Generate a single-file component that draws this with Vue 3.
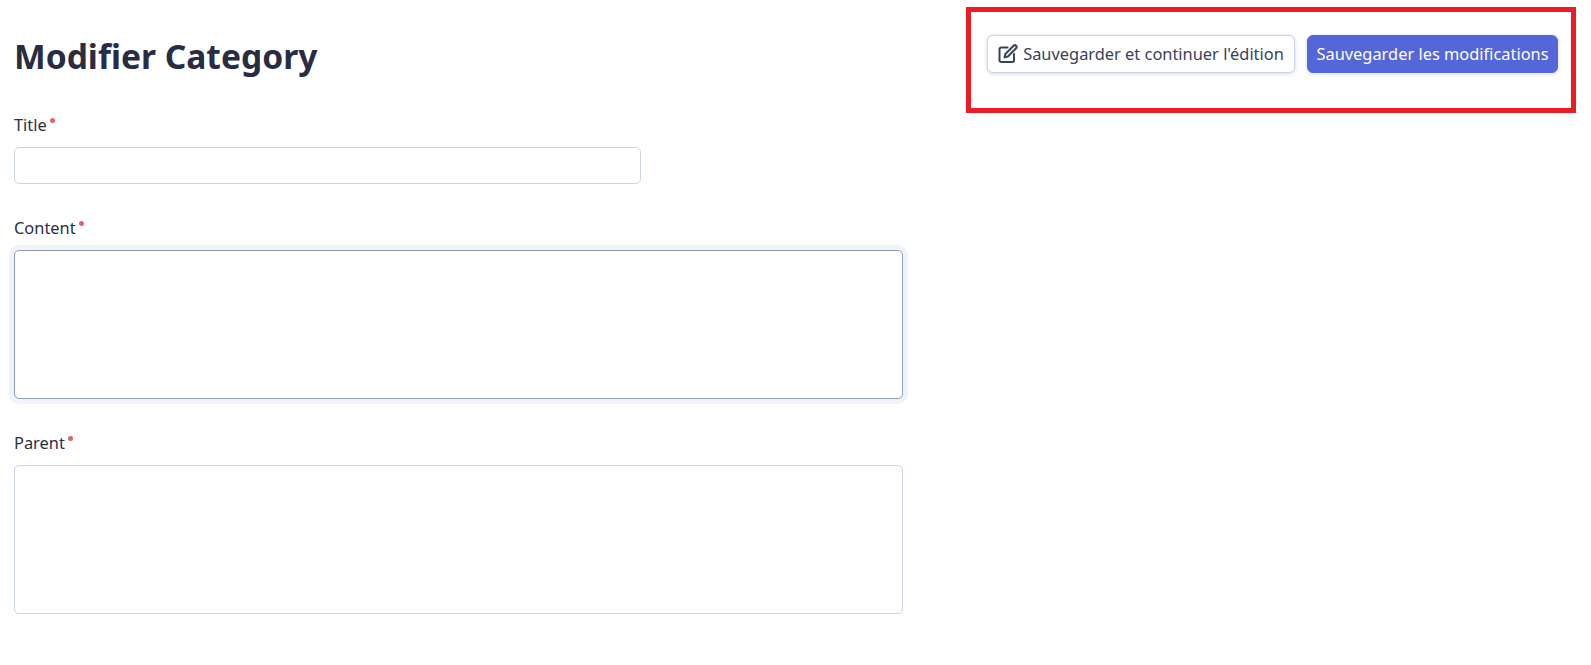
<script setup>
const fields = [
  { label: 'Title', kind: 'input' },
  { label: 'Content', kind: 'area', focused: true },
  { label: 'Parent', kind: 'area' },
]
</script>

<template>
  <div class="page">
    <header class="top">
      <h1 class="title">Modifier Category</h1>
      <div class="actions">
        <button class="btn light" type="button">
          <svg class="ico" viewBox="0 0 20 20" fill="none" stroke="currentColor" stroke-width="2" stroke-linecap="round" stroke-linejoin="round">
            <path d="M9.5 3.5H3.2A1.7 1.7 0 0 0 1.5 5.2v11.1A1.7 1.7 0 0 0 3.2 18h11.1a1.7 1.7 0 0 0 1.7-1.7V10" />
            <path d="M15.6 1.8a1.7 1.7 0 0 1 2.5 2.5l-8.2 8.2-3.4.9.9-3.4z" />
          </svg>
          <span>Sauvegarder et continuer l'édition</span>
        </button>
        <button class="btn primary" type="button">Sauvegarder les modifications</button>
      </div>
    </header>
    <form class="form">
      <div v-for="f in fields" :key="f.label" class="field">
        <label class="label">{{ f.label }}<span class="req" aria-hidden="true"></span></label>
        <input v-if="f.kind === 'input'" class="control" type="text" />
        <textarea v-else class="control" :class="{ focused: f.focused }"></textarea>
      </div>
    </form>
  </div>
</template>

<style>
html, body { background: #fff; }
</style>

<style scoped>
.page {
  box-sizing: border-box;
  height: 665px;
  padding: 7px 15px 0 14px;
  font-family: "Noto Sans", "Open Sans", "Liberation Sans", sans-serif;
  color: #2a3044;
  overflow: hidden;
}
.top {
  display: flex;
  justify-content: space-between;
  align-items: flex-start;
}
.title {
  margin: 24px 0 0;
  font-size: 33.6px;
  line-height: 50px;
  font-weight: 700;
  color: #282d43;
}
.actions {
  box-sizing: border-box;
  width: 610px;
  height: 106px;
  border: 5px solid #ed1c24;
  padding: 23px 13px 0 16px;
  display: flex;
  justify-content: space-between;
  align-items: flex-start;
}
.btn {
  box-sizing: border-box;
  height: 38px;
  border-radius: 6px;
  font-family: inherit;
  font-size: 16.4px;
  line-height: 22px;
  display: inline-flex;
  align-items: center;
  justify-content: center;
  white-space: nowrap;
  box-shadow: 0 1px 4px rgba(60, 70, 110, 0.2);
  padding: 0;
}
.light {
  width: 308px;
  background: #fff;
  border: 1px solid #c9d3e3;
  color: #39415c;
  gap: 5px;
}
.primary {
  width: 251px;
  background: #5467d8;
  border: 1px solid #5467d8;
  color: #fff;
}
.ico { width: 20px; height: 20px; color: #39415c; flex: none; }
.form {
  width: 889px;
  display: flex;
  flex-direction: column;
  gap: 32px;
}
.field { display: flex; flex-direction: column; gap: 10px; }
.label {
  display: block;
  font-size: 16.4px;
  line-height: 24px;
  height: 24px;
  color: #2a3044;
}
.req {
  display: inline-block;
  width: 5px;
  height: 5px;
  border-radius: 50%;
  background: #e8606a;
  margin-left: 3px;
  vertical-align: 8px;
}
.control {
  box-sizing: border-box;
  display: block;
  border: 1px solid #cbd5e3;
  border-radius: 5px;
  background: #fff;
  padding: 0;
  margin: 0;
  outline: none;
  resize: none;
}
input.control { width: 627px; height: 37px; }
textarea.control { width: 889px; height: 149px; }
.control.focused {
  border-color: #8f9db8;
  box-shadow: 0 0 0 5px #f0f3f9;
}
</style>
